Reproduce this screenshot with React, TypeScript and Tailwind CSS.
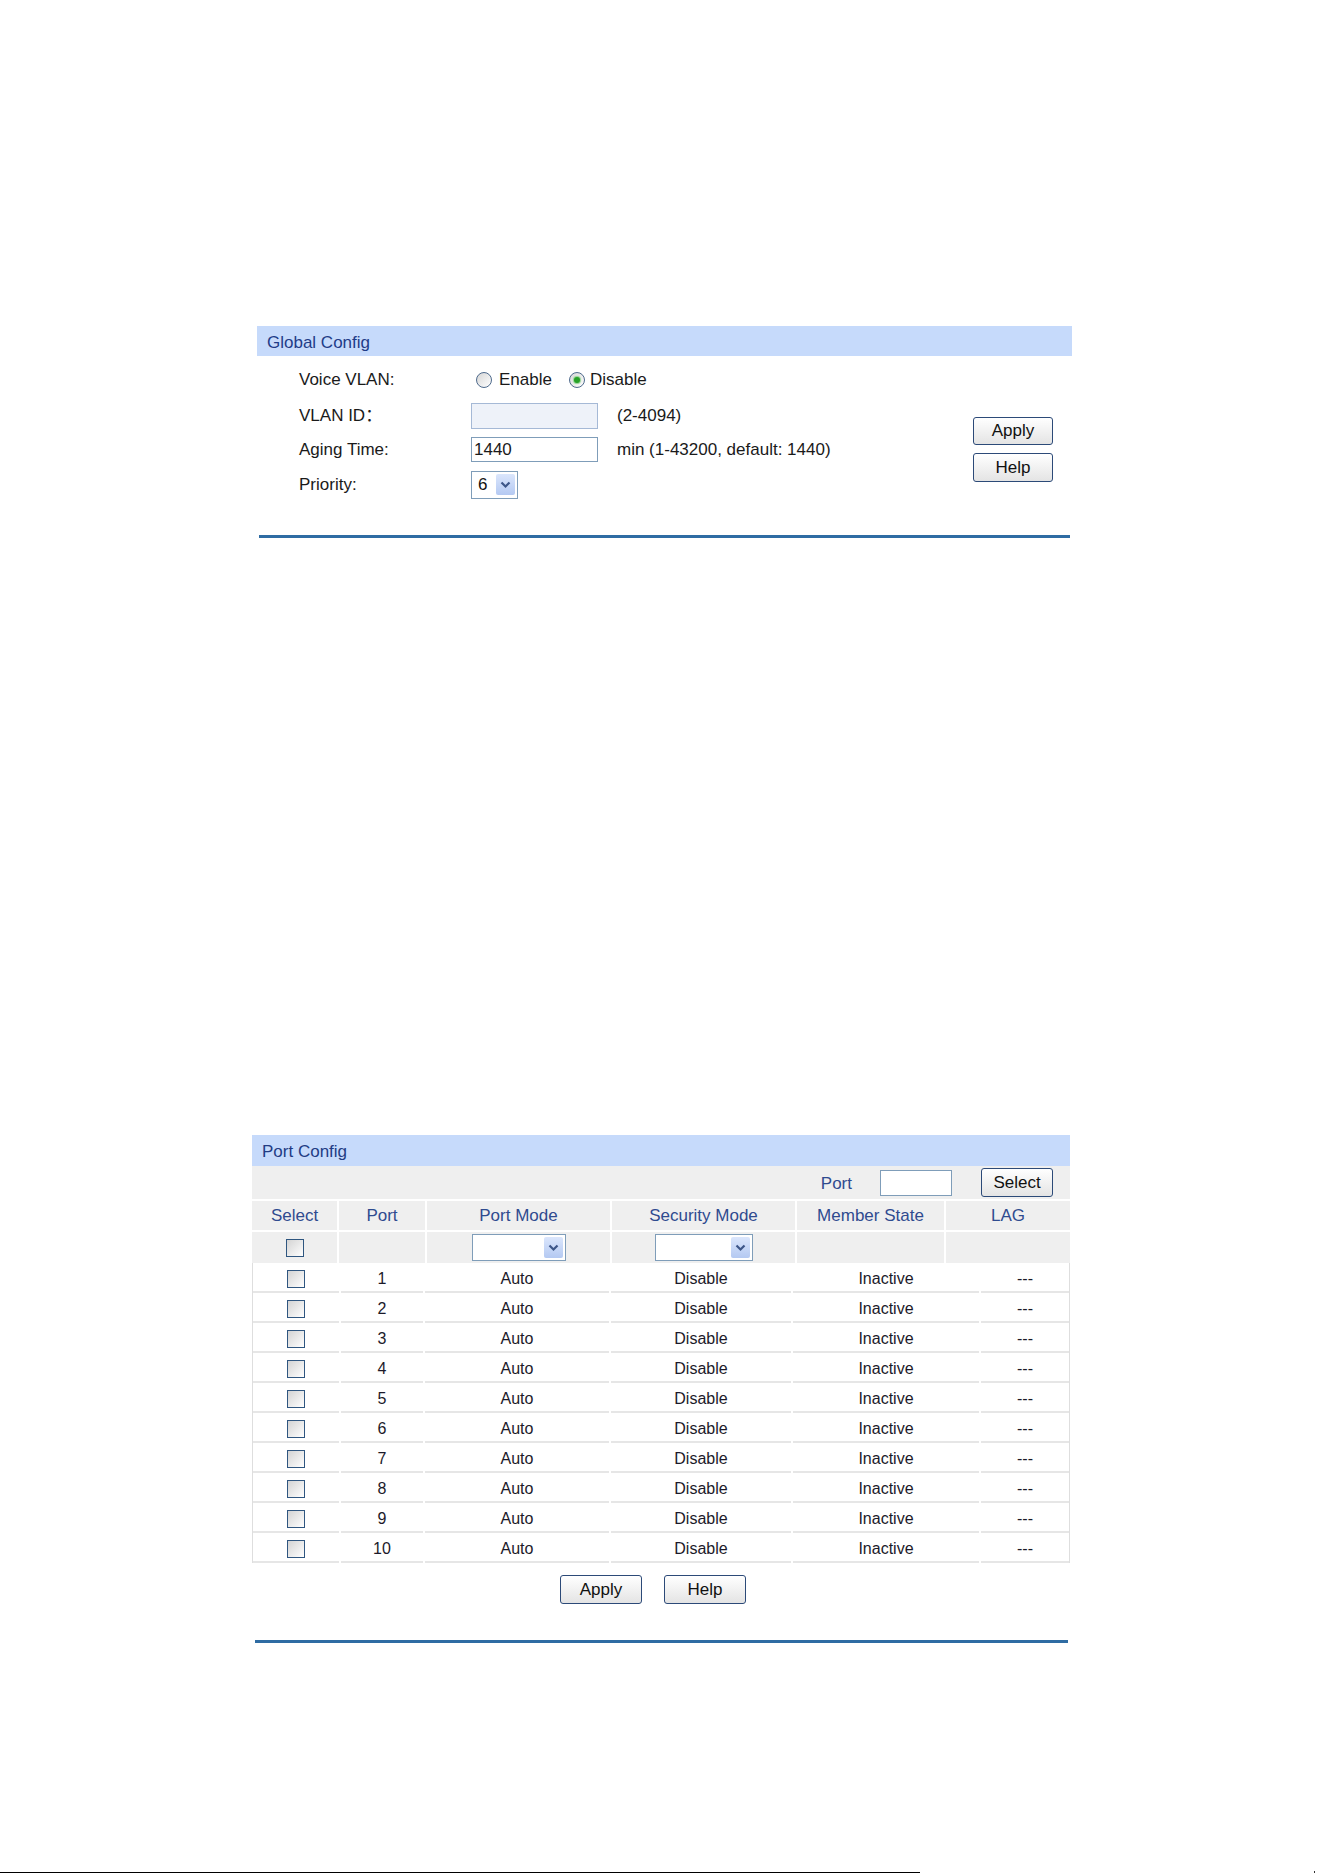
import React from "react";

const ports = Array.from({ length: 10 }, (_, i) => i + 1);

function Chevron() {
  return (
    <svg width="11" height="8" viewBox="0 0 11 8">
      <path d="M1.5 1.5 L5.5 5.5 L9.5 1.5" fill="none" stroke="#3d5688" strokeWidth="2.2" />
    </svg>
  );
}

function DropDown({ className, value }: { className: string; value?: string }) {
  return (
    <div className={`flex items-center justify-between border border-[#7f9db9] bg-white pl-[6px] pr-[2px] ${className}`}>
      <span className="text-[17px] text-[#111]">{value}</span>
      <div className="flex h-[21px] w-[19px] items-center justify-center rounded-[2px] bg-gradient-to-b from-[#dbe6fc] to-[#b4c9f2]">
        <Chevron />
      </div>
    </div>
  );
}

function Radio({ checked }: { checked?: boolean }) {
  return (
    <span className="flex h-[16px] w-[16px] items-center justify-center rounded-full border border-[#4e6a8c] bg-gradient-to-br from-[#d6d6d6] to-white">
      {checked && <span className="h-[6px] w-[6px] rounded-full bg-[#27a127] shadow-[0_0_1px_1px_#8fd38f]" />}
    </span>
  );
}

function Check() {
  return <span className="block h-[18px] w-[18px] border border-[#2f5680] bg-gradient-to-br from-[#d4d4d4] to-white" />;
}

function Btn({ label, className }: { label: string; className: string }) {
  return (
    <button
      type="button"
      className={`flex items-center justify-center rounded-[3px] border border-[#2c4a78] bg-gradient-to-b from-white to-[#e4e4e4] text-[17px] text-[#111] ${className}`}
    >
      {label}
    </button>
  );
}

function GlobalConfig() {
  return (
    <div className="ml-[257px] w-[815px]">
      <div className="flex h-[30px] items-center bg-[#c6dafb] pl-[10px] pt-[3px] text-[17px] text-[#1f3c88]">Global Config</div>
      <div className="flex pb-[33px] pt-[10px] text-[17px] text-[#1a1a1a]">
        <div className="flex flex-col pl-[42px]">
          <div className="flex h-[33px] items-center pb-[5px]">
            <span className="w-[172px]">Voice VLAN:</span>
            <div className="flex items-center">
              <span className="ml-[5px]"><Radio /></span>
              <span className="ml-[7px]">Enable</span>
              <span className="ml-[17px]"><Radio checked /></span>
              <span className="ml-[5px]">Disable</span>
            </div>
          </div>
          <div className="flex h-[33px] items-center">
            <span className="w-[172px]">VLAN ID：</span>
            <div className="h-[26px] w-[127px] border border-[#a5b9d6] bg-[#eef2f9]" />
            <span className="ml-[19px]">(2-4094)</span>
          </div>
          <div className="flex h-[35px] items-center">
            <span className="w-[172px]">Aging Time:</span>
            <div className="flex h-[25px] w-[127px] items-center border border-[#7f9db9] bg-white pl-[2px]">1440</div>
            <span className="ml-[19px]">min (1-43200, default: 1440)</span>
          </div>
          <div className="flex h-[35px] items-center">
            <span className="w-[172px]">Priority:</span>
            <DropDown className="h-[28px] w-[47px]" value="6" />
          </div>
        </div>
        <div className="ml-auto mr-[19px] mt-[51px] flex flex-col gap-[8px]">
          <Btn label="Apply" className="h-[28px] w-[80px]" />
          <Btn label="Help" className="h-[29px] w-[80px]" />
        </div>
      </div>
      <div className="mx-[2px] h-[3px] bg-[#2f6ca3]" />
    </div>
  );
}

const headCols = "grid grid-cols-[85px_86px_183px_183px_147px_124px] gap-x-[2px]";
const rowCols = "grid grid-cols-[86px_82px_184px_180px_186px_88px] gap-x-[2px]";
const cell = "flex h-[30px] items-center justify-center border-b-2 border-[#e6e6e6] pt-[3px]";

function PortConfig() {
  const heads = ["Select", "Port", "Port Mode", "Security Mode", "Member State", "LAG"];
  return (
    <div className="ml-[252px] mt-[597px] w-[818px]">
      <div className="flex h-[31px] items-center bg-[#c6dafb] pl-[10px] pt-[3px] text-[17px] text-[#223c84]">Port Config</div>
      <div className="flex h-[33px] items-center justify-end bg-[#efefef] pr-[17px]">
        <span className="pt-[2px] text-[17px] text-[#2f4b8f]">Port</span>
        <div className="ml-[28px] h-[26px] w-[72px] border border-[#7f9db9] bg-white" />
        <Btn label="Select" className="ml-[29px] h-[29px] w-[72px]" />
      </div>
      <div className={`${headCols} mt-[2px]`}>
        {heads.map((h) => (
          <div key={h} className="flex h-[29px] items-center justify-center bg-[#efefef] text-[17px] text-[#2f4b8f]">
            {h}
          </div>
        ))}
      </div>
      <div className={`${headCols} mt-[2px]`}>
        <div className="flex h-[31px] items-center justify-center bg-[#efefef]">
          <Check />
        </div>
        <div className="h-[31px] bg-[#efefef]" />
        <div className="flex h-[31px] items-center justify-center bg-[#efefef]">
          <DropDown className="h-[27px] w-[94px]" />
        </div>
        <div className="flex h-[31px] items-center justify-center bg-[#efefef]">
          <DropDown className="h-[27px] w-[98px]" />
        </div>
        <div className="h-[31px] bg-[#efefef]" />
        <div className="h-[31px] bg-[#efefef]" />
      </div>
      <div className="border-x border-[#dedede]">
        {ports.map((p) => (
          <div key={p} className={`${rowCols} text-[16px] text-[#1c1a2a]`}>
            <div className={cell}>
              <Check />
            </div>
            <div className={cell}>{p}</div>
            <div className={cell}>Auto</div>
            <div className={cell}>Disable</div>
            <div className={cell}>Inactive</div>
            <div className={cell}>---</div>
          </div>
        ))}
      </div>
      <div className="mt-[12px] flex gap-[22px] pl-[308px]">
        <Btn label="Apply" className="h-[29px] w-[82px]" />
        <Btn label="Help" className="h-[29px] w-[82px]" />
      </div>
      <div className="ml-[3px] mt-[36px] h-[3px] w-[813px] bg-[#2f6ca3]" />
    </div>
  );
}

export default function App() {
  return (
    <div className="h-[1873px] w-[1324px] overflow-hidden bg-white pt-[326px] font-['Liberation_Sans','Noto_Sans_CJK_SC',sans-serif]">
      <GlobalConfig />
      <PortConfig />
      <div className="mt-[228px] flex items-end">
        <div className="h-[2px] w-[920px] bg-black" />
        <div className="ml-auto mr-[9px] h-[3px] w-[1px] bg-[#333]" />
      </div>
    </div>
  );
}
